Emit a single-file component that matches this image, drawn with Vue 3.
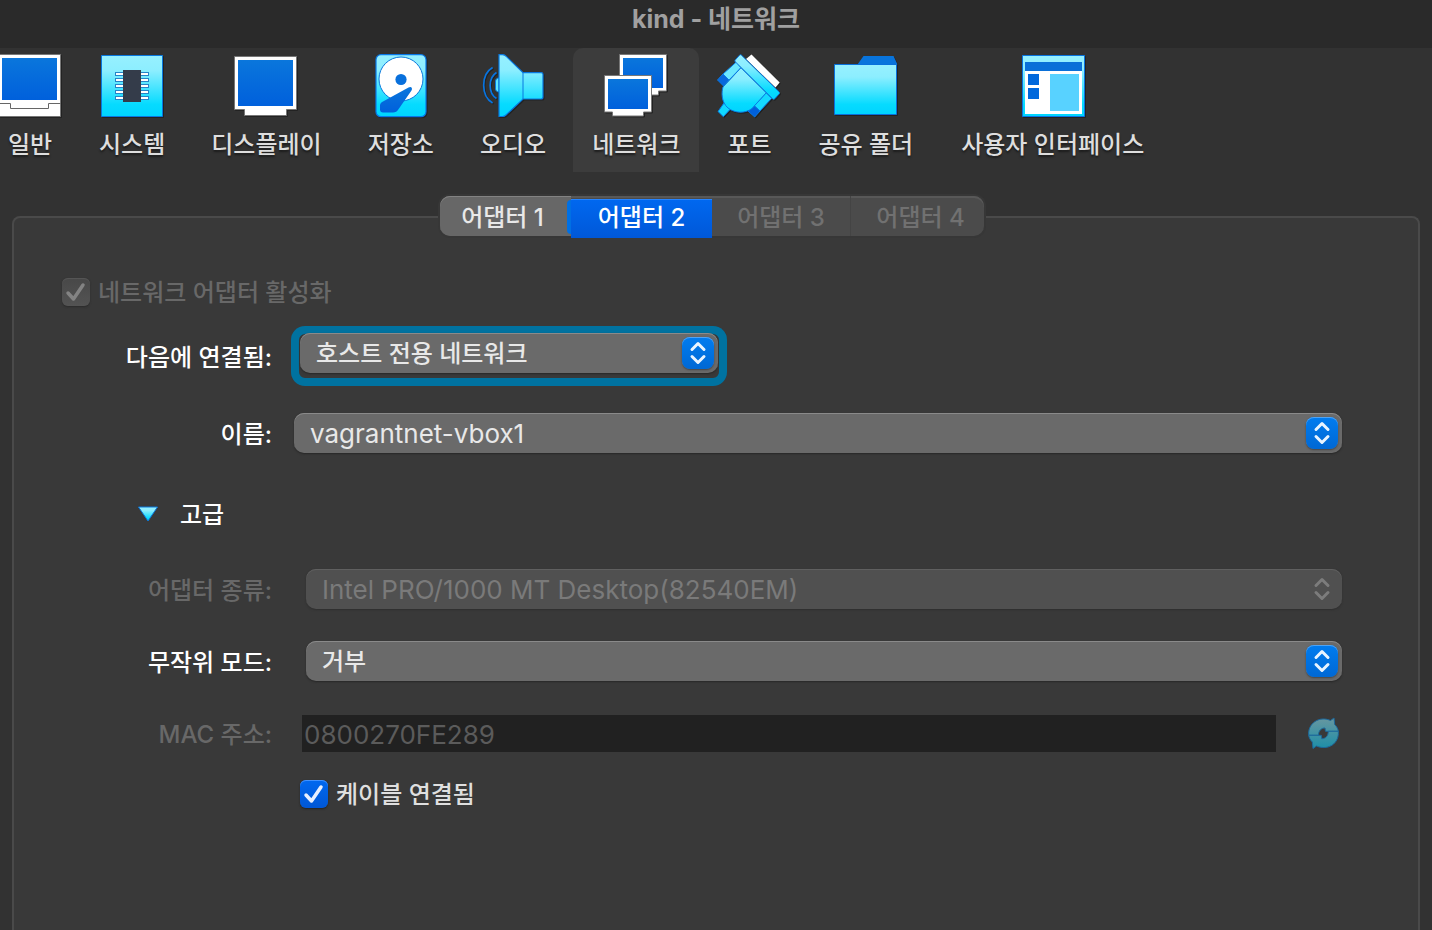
<script setup>
import { ref } from 'vue'

const sections = [
  { id: 'general', label: '일반' },
  { id: 'system', label: '시스템' },
  { id: 'display', label: '디스플레이' },
  { id: 'storage', label: '저장소' },
  { id: 'audio', label: '오디오' },
  { id: 'network', label: '네트워크' },
  { id: 'ports', label: '포트' },
  { id: 'folders', label: '공유 폴더' },
  { id: 'interface', label: '사용자 인터페이스' }
]
const adapters = [
  { n: 1, disabled: false },
  { n: 2, disabled: false },
  { n: 3, disabled: true },
  { n: 4, disabled: true }
]
const section = ref('network')
const adapter = ref(2)
const cable = ref(true)
const pins = [18, 24, 30, 36, 42]
</script>

<template>
  <div class="window">
    <svg class="defs" aria-hidden="true">
      <defs>
        <linearGradient id="cyan" x1="0" y1="0" x2="0" y2="1">
          <stop offset="0" stop-color="#97f0ff" />
          <stop offset="0.25" stop-color="#8ceeff" />
          <stop offset="0.8" stop-color="#06dbff" />
          <stop offset="1" stop-color="#00d4ff" />
        </linearGradient>
        <linearGradient id="blue" x1="0" y1="0" x2="0" y2="1">
          <stop offset="0" stop-color="#0a76dc" />
          <stop offset="1" stop-color="#0060dc" />
        </linearGradient>
        <linearGradient id="muted" gradientUnits="userSpaceOnUse" x1="0" y1="3" x2="0" y2="33">
          <stop offset="0" stop-color="#6797a0" />
          <stop offset="1" stop-color="#1e8fa8" />
        </linearGradient>
      </defs>
    </svg>

    <header class="titlebar"><h1>kind - 네트워크</h1></header>

    <nav class="toolbar">
      <button
        v-for="s in sections"
        :key="s.id"
        type="button"
        class="tool"
        :class="{ active: s.id === section }"
        @click="section = s.id"
      >
        <svg class="tool-icon" viewBox="0 0 64 64" aria-hidden="true">
          <g v-if="s.id === 'general'">
            <path d="M1.5.5h61v62h-61z" fill="#fff" stroke="#777" />
            <path d="M4 4h55v42H4z" fill="url(#blue)" />
            <path d="M1 49.5h11.500v5h38v-5h12" fill="none" stroke="#666" />
          </g>
          <g v-else-if="s.id === 'system'">
            <path d="M1.500 1.500h61v61h-61z" fill="url(#cyan)" stroke="#0878e0" />
            <template v-for="y in pins" :key="y">
              <rect x="15.5" :y="y + 0.5" width="33" height="3" fill="#fff" stroke="#2484c8" />
            </template>
            <path d="M23 16h18v32H23z" fill="#343c4a" />
          </g>
          <g v-else-if="s.id === 'display'">
            <path d="M.5 2.500h62v53h-10v6h-42v-6H.5z" fill="#fff" stroke="#777" />
            <path d="M4 6h55v46H4z" fill="url(#blue)" />
          </g>
          <g v-else-if="s.id === 'storage'">
            <rect x="7" y=".7" width="50" height="62" rx="5" fill="url(#cyan)" stroke="#0878e8" stroke-width="1.2" />
            <circle cx="32" cy="25" r="22" fill="#fff" stroke="#0878dc" />
            <circle cx="32" cy="25.500" r="5.600" fill="#0870dc" />
            <path d="M39.500 33.500c2.500-1.500 4.500.5 3 3L30 54.500c-2 3-3.500 4-6 4H14c-2 0-3-1-3-3v-4c0-2 1-3 3-4z" fill="url(#blue)" />
          </g>
          <g v-else-if="s.id === 'audio'">
            <path d="M18 24c-2.500 0-3.500 1.500-3.500 3.500v7c0 2 1 3.500 3.500 3.500z" fill="#5ce5ff" stroke="#0878dc" />
            <path d="M18 .6h3.500c1.800 0 2.800.7 4 2L42 18.600h18c1.500 0 2 .6 2 2V43c0 1.400-.6 2-2 2H42L25 61c-1 1-2 1.500-3.500 1.500H18z" fill="url(#cyan)" stroke="#0878e0" stroke-width="1.2" />
            <path d="M42 18.600V45" stroke="#0878e0" />
            <path d="M11.600 13.500C-.3 20.500-.3 42 11.600 49M15.500 18.500c-8.500 5.500-8.500 20.500 0 26" fill="none" stroke="#0874e0" stroke-width="1.700" />
          </g>
          <g v-else-if="s.id === 'network'">
            <path d="M15.500.5h47V37h-8v4h-22v-4h-17z" fill="#fff" stroke="#777" />
            <path d="M19 4h40v30H19z" fill="url(#blue)" />
            <path d="M.5 21.500h47V58h-8v4h-31v-4h-8z" fill="#fff" stroke="#777" />
            <path d="M4 25h40v30H4z" fill="url(#blue)" />
          </g>
          <g v-else-if="s.id === 'ports'">
            <path d="M34.500.5 62.700 28.500 58.500 33.500 29 5z" fill="#fff" />
            <g stroke="#0a7ae4" stroke-linejoin="round">
              <path d="M6 20 .5 26 6.500 32l5.500-6z" fill="#0868dc" />
              <path d="M19.300 8 24 13.700 12 26 6 20z" fill="#6ce8ff" />
              <path d="M49.300 38.700 54.700 44.300 43 57 37 51.700z" fill="#14d9ff" />
              <path d="M37 51.700 31 57 37.700 63 43 57z" fill="#0060dc" />
              <path d="M7 49 1 57.500 6.300 62.700 13.500 55z" fill="#10d8ff" />
              <path d="M24 13.700 49.300 38.700 35 54.500C28 60 17 59 11 54 4 48 4.500 38 6 33z" fill="url(#cyan)" />
              <path d="M24.500 1.200 62 37.800c.8.900.8 1.500 0 2.300l-4.200 4.600c-.8.800-1.500.8-2.300 0L18.500 8c-.8-.8-.8-1.500 0-2.300l4-4.500c.7-.7 1.300-.7 2 0z" fill="url(#cyan)" />
            </g>
          </g>
          <g v-else-if="s.id === 'folders'">
            <path d="M23.500 10.500 29.500 2h30l4 8.500z" fill="#0874dc" />
            <path d="M.5 10.500h62v50H.5z" fill="url(#cyan)" stroke="#0870dc" />
          </g>
          <g v-else>
            <path d="M1.500 1.500h62v61h-62z" fill="url(#cyan)" stroke="#0874e0" />
            <path d="M4 8h57v52H4z" fill="#fff" />
            <path d="M4 8h57v9H4z" fill="#0a70d8" />
            <path d="M7 20h11v11H7zM7 34h11v11H7z" fill="#0068dc" />
            <path d="M29 20h29v37H29z" fill="#58d2ff" />
          </g>
        </svg>
        <span>{{ s.label }}</span>
      </button>
    </nav>

    <main class="panel">
      <div class="tabs" role="tablist">
        <button
          v-for="a in adapters"
          :key="a.n"
          type="button"
          role="tab"
          class="tab"
          :class="{ selected: a.n === adapter }"
          :aria-selected="a.n === adapter"
          :disabled="a.disabled"
          @click="adapter = a.n"
        >어댑터 {{ a.n }}</button>
      </div>

      <form class="form" @submit.prevent>
        <label class="check enable">
          <input type="checkbox" checked disabled />
          <svg viewBox="0 0 28 28" aria-hidden="true"><path d="M6 15l5.500 6L21 7" /></svg>
          <span>네트워크 어댑터 활성화</span>
        </label>

        <div class="row attached">
          <label for="attached">다음에 연결됨:</label>
          <div class="focus-ring">
            <div class="combo">
              <select id="attached"><option>호스트 전용 네트워크</option></select>
              <svg viewBox="0 0 32 32" aria-hidden="true"><path d="M10 12.500l6-6 6 6M10 19.500l6 6 6-6" /></svg>
            </div>
          </div>
        </div>

        <div class="row name">
          <label for="name">이름:</label>
          <div class="combo latin">
            <select id="name"><option>vagrantnet-vbox1</option></select>
            <svg viewBox="0 0 32 32" aria-hidden="true"><path d="M10 12.500l6-6 6 6M10 19.500l6 6 6-6" /></svg>
          </div>
        </div>

        <button type="button" class="advanced" aria-expanded="true">
          <svg viewBox="0 0 22 16" aria-hidden="true"><path d="M1.500 1h19L11 15z" /></svg>
          <span>고급</span>
        </button>

        <div class="row inset">
          <label for="type" class="dim">어댑터 종류:</label>
          <div class="combo latin off">
            <select id="type" disabled><option>Intel PRO/1000 MT Desktop(82540EM)</option></select>
            <svg viewBox="0 0 32 32" aria-hidden="true"><path d="M10 12.500l6-6 6 6M10 19.500l6 6 6-6" /></svg>
          </div>
        </div>

        <div class="row inset">
          <label for="promisc">무작위 모드:</label>
          <div class="combo">
            <select id="promisc"><option>거부</option></select>
            <svg viewBox="0 0 32 32" aria-hidden="true"><path d="M10 12.500l6-6 6 6M10 19.500l6 6 6-6" /></svg>
          </div>
        </div>

        <div class="row mac">
          <label for="mac" class="dim">MAC 주소:</label>
          <input id="mac" type="text" value="0800270FE289" disabled />
          <button type="button" class="refresh" aria-label="MAC 주소 새로 고침" disabled>
            <svg viewBox="0 0 36 36" aria-hidden="true">
              <path d="M3.700 20.300C2.500 8.500 14 .5 25.500 5.500L29 3l.7 6.500c2 2 3.300 4.300 3.600 6.800H20.500l-.5-3.300c-4 0-6.500 3-6.500 7.300z" />
              <path d="M33.300 16.300C34.500 28.500 23 36 11.500 31L8 33.500 7.300 27c-2-2-3.300-4.200-3.600-6.700h12.600l.5 3.400c4 0 6.500-3 6.500-7.400z" />
            </svg>
          </button>
        </div>

        <label class="check cable">
          <input v-model="cable" type="checkbox" />
          <svg v-if="cable" viewBox="0 0 28 28" aria-hidden="true"><path d="M6 15l5.500 6L21 7" /></svg>
          <span>케이블 연결됨</span>
        </label>
      </form>
    </main>
  </div>
</template>

<style>
html,
body,
#app {
  height: 100%;
}
body {
  margin: 0;
  overflow: hidden;
  background: #323232;
}
</style>

<style scoped>
.window {
  display: flex;
  flex-direction: column;
  height: 100%;
  overflow: hidden;
  background: #323232;
  color: #fff;
  font: 500 24px/32px Inter, "Noto Sans CJK KR", sans-serif;
}
.window * {
  box-sizing: border-box;
}
button,
select,
input {
  margin: 0;
  padding: 0;
  border: 0;
  background: none;
  color: inherit;
  font: inherit;
}
.defs {
  position: absolute;
  width: 0;
  height: 0;
}
.titlebar {
  flex: none;
  height: 48px;
  background: #2a2a2a;
  text-align: center;
}
h1 {
  margin: 0;
  padding-top: 3px;
  color: #a0a0a0;
  font-size: 25px;
  line-height: 32px;
  font-weight: 700;
}
.toolbar {
  display: flex;
  flex: none;
  gap: 8px;
  height: 124px;
  margin-left: -12px;
}
.tool {
  display: flex;
  flex: none;
  flex-direction: column;
  align-items: center;
  gap: 11px;
  padding: 6px 19px 0;
  color: #dedede;
  text-shadow: 0 2px 2px #1c1c1c;
  white-space: nowrap;
}
.tool.active {
  border-radius: 10px 10px 0 0;
  background: #3c3c3c;
}
.tool:last-child {
  padding: 6px 21px 0;
}
.tool-icon {
  width: 64px;
  height: 64px;
  margin: 0 -9px;
  overflow: visible;
  filter: drop-shadow(1px 1px 0 #222);
}
.panel {
  flex: 1;
  margin: 44px 12px 0;
  border: 2px solid #4a4a4a;
  border-bottom: 0;
  border-radius: 8px 8px 0 0;
  background: #393939;
}
.tabs {
  display: grid;
  grid-template-columns: 131fr 141fr 138fr 134fr;
  width: 544px;
  height: 40px;
  margin: -22px 0 0 calc(50% - 276px);
  border-radius: 10px;
  background: #4b4b4b;
  box-shadow: 0 0 0 2px #373737, inset 0 2px 0 #585858;
}
.tab {
  height: 40px;
  padding-top: 3px;
}
.tab:first-child {
  padding-right: 6px;
  border-radius: 10px 0 0 10px;
  background: #676767;
  box-shadow: inset 0 1px 0 #838383;
  color: #e8e8e8;
}
.tab.selected {
  position: relative;
  height: 39px;
  margin-top: 3px;
  padding: 0 0 2px;
  background: linear-gradient(#0068f0, #0058d8);
  box-shadow: inset 0 1px 0 #2684ff;
}
.tab.selected::before {
  content: "";
  position: absolute;
  top: 1px;
  left: -4px;
  width: 4px;
  height: 34px;
  border-radius: 4px 0 0 4px;
  background: #0070e4;
}
.tab:disabled {
  color: #717171;
}
.tab:last-child {
  padding-left: 6px;
  border-left: 1px solid #444;
}
.form {
  display: flex;
  flex-direction: column;
  padding: 42px 76px 0 0;
}
.check {
  display: flex;
  align-items: center;
  align-self: flex-start;
  position: relative;
  gap: 8px;
  height: 28px;
}
.check span,
.advanced span {
  padding-top: 2px;
}
.check input {
  appearance: none;
  width: 28px;
  height: 28px;
  border-radius: 6px;
  background: linear-gradient(#0068f0, #0057d6);
  box-shadow: inset 0 1px 0 #4292ff, 0 1px 2px #222;
}
.check svg {
  position: absolute;
  left: 0;
  top: 0;
  width: 28px;
  height: 28px;
  fill: none;
  stroke: #e8f0ff;
  stroke-width: 3.5;
  stroke-linecap: round;
  stroke-linejoin: round;
  pointer-events: none;
}
.enable {
  margin-left: 48px;
  color: #686868;
}
.enable input {
  background: linear-gradient(#484848, #535353);
  box-shadow: inset 0 1px 0 #555, 0 1px 2px #2a2a2a;
}
.enable svg {
  stroke: #838383;
}
.cable {
  margin: 27px 0 0 286px;
  color: #dfdfdf;
}
.row {
  display: flex;
  align-items: center;
  height: 40px;
}
.row > label {
  flex: 0 0 258px;
  padding-top: 3px;
  text-align: right;
}
.row > .dim {
  color: #686868;
}
.attached {
  height: 60px;
  margin-top: 20px;
}
.name {
  margin-top: 27px;
}
.focus-ring {
  width: 436px;
  height: 60px;
  margin-left: 19px;
  padding: 7px 9px 0;
  border-radius: 14px;
  background: #393939;
  box-shadow: inset 0 0 0 8px #0072a0;
}
.combo {
  position: relative;
  flex: 1;
  height: 40px;
}
.name .combo {
  margin-left: 22px;
}
.inset .combo {
  margin-left: 34px;
}
.combo select {
  appearance: none;
  width: 100%;
  height: 40px;
  padding: 2px 48px 0 16px;
  border-radius: 10px;
  background: #6a6a6a;
  box-shadow: inset 0 1px 0 #8a8a8a, 0 1px 2px #262626;
  color: #e8e8e8;
  outline: none;
}
.combo.latin select {
  font-size: 26px;
  font-weight: 400;
}
.combo svg {
  position: absolute;
  right: 4px;
  top: 4px;
  width: 32px;
  height: 32px;
  border-radius: 8px;
  background: linear-gradient(#007cf0, #0068d4);
  box-shadow: inset 0 1px 0 #50a4f4, 0 1px 2px #444;
  fill: none;
  stroke: #e8f4ff;
  stroke-width: 3;
  stroke-linecap: round;
  stroke-linejoin: round;
  pointer-events: none;
}
.combo.off select {
  background: #505050;
  box-shadow: inset 0 1px 0 #606060, 0 1px 2px #2e2e2e;
  color: #7a7a7a;
  opacity: 1;
}
.combo.off svg {
  background: none;
  box-shadow: none;
  stroke: #7c7c7c;
}
.advanced {
  display: flex;
  align-items: center;
  align-self: flex-start;
  gap: 21px;
  height: 40px;
  margin: 41px 0 35px 123px;
}
.advanced svg {
  width: 22px;
  height: 16px;
}
.advanced path {
  fill: url(#cyan);
  stroke: #0a78dc;
}
.inset + .inset,
.mac {
  margin-top: 32px;
}
.mac input {
  flex: 1;
  min-width: 0;
  height: 37px;
  margin-left: 30px;
  padding: 2px 2px 0;
  background: #212121;
  color: #5b5b5b;
  font-size: 26px;
  font-weight: 400;
}
.refresh {
  width: 36px;
  height: 36px;
  margin: 0 1px 0 29px;
}
.refresh svg {
  display: block;
  width: 36px;
  height: 36px;
}
.refresh path {
  fill: url(#muted);
  stroke: #1c689c;
}
</style>
